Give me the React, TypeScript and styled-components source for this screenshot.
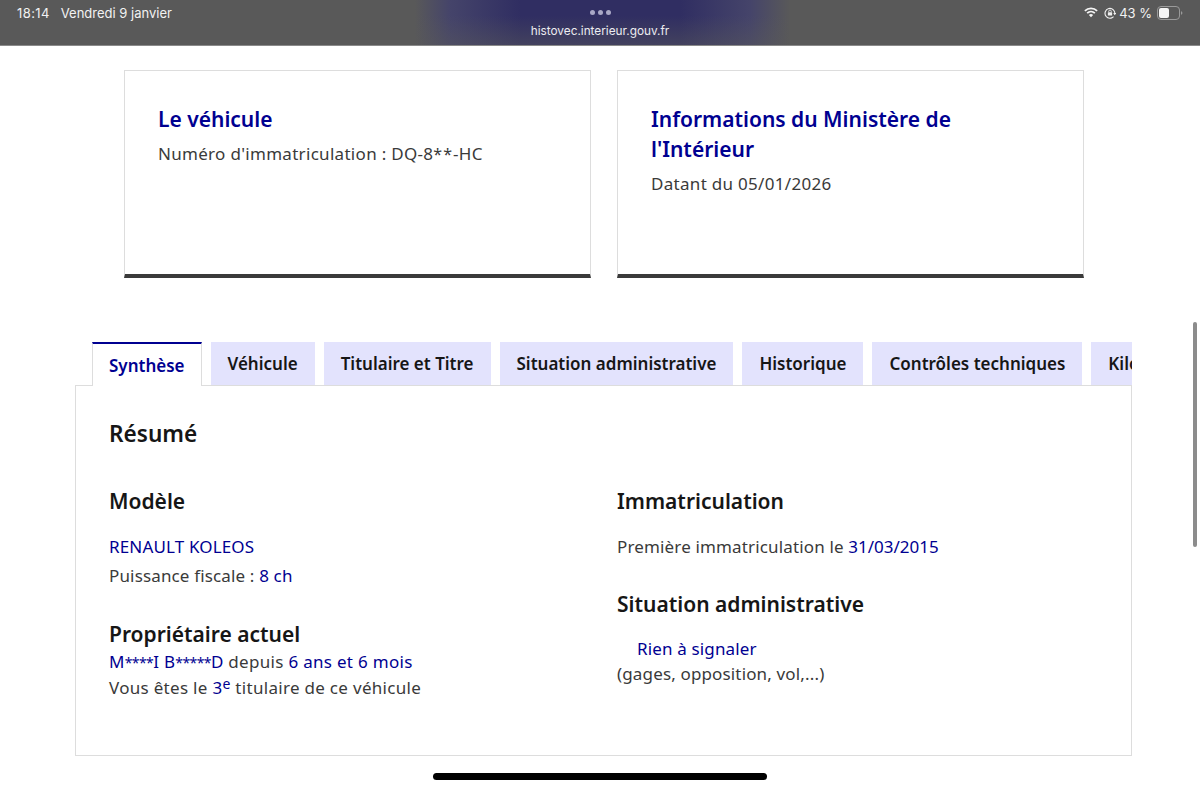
import React from "react";
import styled, { createGlobalStyle } from "styled-components";

const Global = createGlobalStyle`
  html, body { margin: 0; padding: 0; background: #fff; }
  body { font-family: "Noto Sans", "Open Sans", "Liberation Sans", sans-serif; }
  * { box-sizing: border-box; }
`;
const Page = styled.div`
  position: relative;
  width: 1200px;
  height: 788px;
  overflow: hidden;
  background: #fff;
`;
const StatusBar = styled.header`
  height: 46px;
  display: grid;
  grid-template-columns: 1fr auto 1fr;
  padding: 0 17px 0 17px;
  color: #f2f2f2;
  font-family: "Inter", "Liberation Sans", sans-serif;
  font-size: 13px;
  background:
    linear-gradient(180deg, rgba(89, 89, 89, 0) 35%, rgba(89, 89, 89, 0.45) 100%),
    linear-gradient(90deg, #595959 0, #595959 415px, #45446a 450px, #302e62 520px, #302e62 680px, #45446a 750px, #595959 790px, #595959 100%);
  border-bottom: 1px solid #8a8a8a;
`;
const StatusLeft = styled.div`
  display: flex;
  gap: 11px;
  padding-top: 6px;
  line-height: 14px;
`;
const Clock = styled.span`
  letter-spacing: 0.4px;
`;
const StatusCenter = styled.div`
  display: flex;
  flex-direction: column;
  align-items: center;
  padding-top: 10px;
`;
const Dots = styled.div`
  display: flex;
  gap: 3px;
  margin-bottom: 9px;
`;
const Dot = styled.span`
  width: 5px;
  height: 5px;
  border-radius: 50%;
  background: #a9a8c6;
`;
const Url = styled.div`
  font-size: 11.8px;
  line-height: 14px;
  color: #ececf0;
`;
const StatusRight = styled.div`
  display: flex;
  justify-content: flex-end;
  align-items: flex-start;
  gap: 4px;
  padding-top: 6px;
  line-height: 14px;
`;
const StatusIcon = styled.svg<{ $left?: number }>`
  margin: 1px 0 0 ${(p) => p.$left ?? 0}px;
`;
const Percent = styled.span`
  margin: 0 1px 0 -1px;
`;
const Main = styled.main`
  padding: 24px 0 0 75px;
  width: 1132px;
`;
const Cards = styled.section`
  display: flex;
  gap: 26px;
  margin-left: 49px;
`;
const Card = styled.article`
  width: 467px;
  height: 208px;
  padding: 33px 33px 0;
  border: 1px solid #dddddd;
  border-bottom: 4px solid #3a3a3a;
`;
const CardTitle = styled.h2`
  margin: 0 0 5px;
  font-size: 21px;
  line-height: 30px;
  font-weight: 600;
  color: #000091;
`;
const CardText = styled.p`
  margin: 0;
  font-size: 17px;
  letter-spacing: 0.3px;
  line-height: 30px;
  color: #3a3a3a;
`;
const Tabs = styled.nav`
  position: relative;
  z-index: 1;
  display: flex;
  gap: 9px;
  height: 44px;
  margin-top: 64px;
  margin-bottom: -1px;
  padding-left: 17px;
  overflow: hidden;
`;
const Tab = styled.div<{ $active?: boolean }>`
  flex: none;
  height: ${(p) => (p.$active ? "44px" : "43px")};
  padding: 0 ${(p) => (p.$active ? 16 : 17)}px;
  display: flex;
  align-items: center;
  font-size: 17px;
  font-weight: 600;
  white-space: nowrap;
  color: ${(p) => (p.$active ? "#000091" : "#161616")};
  background: ${(p) => (p.$active ? "#fff" : "#e3e3fd")};
  border-top: ${(p) => (p.$active ? "2px solid #000091" : "none")};
  border-left: ${(p) => (p.$active ? "1px solid #dddddd" : "none")};
  border-right: ${(p) => (p.$active ? "1px solid #dddddd" : "none")};
`;
const Panel = styled.section`
  height: 371px;
  padding: 32px 33px 0;
  border: 1px solid #dddddd;
`;
const PanelTitle = styled.h2`
  margin: 0 0 36px;
  font-size: 22.6px;
  line-height: 32px;
  font-weight: 600;
  color: #161616;
`;
const Columns = styled.div`
  display: grid;
  grid-template-columns: 508px 1fr;
`;
const Column = styled.div``;
const Heading = styled.h3<{ $after?: number }>`
  margin: 0 0 ${(p) => p.$after ?? 0}px;
  font-size: 21px;
  line-height: 30px;
  font-weight: 600;
  color: #161616;
`;
const Line = styled.p<{ $after?: number; $indent?: number; $height?: number; $spacing?: number }>`
  margin: 0 0 ${(p) => p.$after ?? 0}px;
  padding-left: ${(p) => p.$indent ?? 0}px;
  font-size: 17px;
  letter-spacing: ${(p) => p.$spacing ?? 0.15}px;
  line-height: ${(p) => p.$height ?? 29}px;
  color: #3a3a3a;
`;
const Value = styled.span<{ $tight?: boolean }>`
  color: #000091;
  letter-spacing: ${(p) => (p.$tight ? "0" : "inherit")};
`;
const Stars = styled.span`
  font-size: 14px;
  letter-spacing: -0.6px;
`;
const CardStars = styled.span`
  font-size: 16px;
  letter-spacing: 1px;
`;
const Sup = styled.sup`
  font-size: 14px;
  line-height: 0;
  vertical-align: 5px;
  color: #000091;
`;
const ScrollThumb = styled.div`
  position: absolute;
  left: 1193px;
  top: 322px;
  width: 4px;
  height: 225px;
  border-radius: 2px;
  background: #8c8c8c;
`;
const HomeBar = styled.div`
  position: absolute;
  left: 433px;
  top: 773px;
  width: 334px;
  height: 7px;
  border-radius: 4px;
  background: #000;
`;

const Wifi = () => (
  <StatusIcon width="14" height="11" viewBox="0 0 16 12">
    <path d="M1 4.2a10 10 0 0 1 14 0" fill="none" stroke="#f4f4f4" strokeWidth="2" />
    <path d="M3.6 6.8a6.4 6.4 0 0 1 8.8 0" fill="none" stroke="#f4f4f4" strokeWidth="2" />
    <path d="M8 11.5 5.6 8.9a3.4 3.4 0 0 1 4.8 0z" fill="#f4f4f4" />
  </StatusIcon>
);
const Lock = () => (
  <StatusIcon $left={2} width="12" height="12" viewBox="0 0 13 13">
    <path d="M2.3 10.2A5.3 5.3 0 1 1 11.6 8" fill="none" stroke="#f0f0f0" strokeWidth="1.2" />
    <path d="M2.3 10.2A5.3 5.3 0 0 0 11.6 8" fill="none" stroke="#f0f0f0" strokeWidth="1.2" strokeDasharray="9 3" />
    <path d="M10 6.6h3.2l-1.6 2.4z" fill="#f0f0f0" />
    <rect x="4.2" y="5.6" width="4.6" height="3.6" rx=".6" fill="#f0f0f0" />
    <path d="M5.1 5.6V4.7a1.4 1.4 0 0 1 2.8 0v.9" fill="none" stroke="#f0f0f0" strokeWidth=".9" />
  </StatusIcon>
);
const Battery = () => (
  <svg width="26" height="14" viewBox="0 0 26 14">
    <rect x=".5" y=".5" width="22" height="13" rx="3.5" fill="none" stroke="#9a9a9a" />
    <rect x="2" y="2" width="10" height="10" rx="2" fill="#f6f6f6" />
    <path d="M24 5.2c1 .3 1.4 1 1.4 1.8s-.4 1.5-1.4 1.8z" fill="#9a9a9a" />
  </svg>
);

const tabs = ["Véhicule", "Titulaire et Titre", "Situation administrative", "Historique", "Contrôles techniques", "Kilométrage"];

export default function App() {
  return (
    <Page>
      <Global />
      <StatusBar>
        <StatusLeft>
          <Clock>18:14</Clock>
          <span>Vendredi 9 janvier</span>
        </StatusLeft>
        <StatusCenter>
          <Dots>
            <Dot />
            <Dot />
            <Dot />
          </Dots>
          <Url>histovec.interieur.gouv.fr</Url>
        </StatusCenter>
        <StatusRight>
          <Wifi />
          <Lock />
          <Percent>43 %</Percent>
          <Battery />
        </StatusRight>
      </StatusBar>
      <Main>
        <Cards>
          <Card>
            <CardTitle>Le véhicule</CardTitle>
            <CardText>Numéro d'immatriculation : DQ-8<CardStars>**</CardStars>-HC</CardText>
          </Card>
          <Card>
            <CardTitle>Informations du Ministère de l'Intérieur</CardTitle>
            <CardText>Datant du 05/01/2026</CardText>
          </Card>
        </Cards>
        <Tabs>
          <Tab $active>Synthèse</Tab>
          {tabs.map((t) => (
            <Tab key={t}>{t}</Tab>
          ))}
        </Tabs>
        <Panel>
          <PanelTitle>Résumé</PanelTitle>
          <Columns>
            <Column>
              <Heading $after={16}>Modèle</Heading>
              <Line><Value>RENAULT KOLEOS</Value></Line>
              <Line $after={29}>Puissance fiscale : <Value>8 ch</Value></Line>
              <Heading>Propriétaire actuel</Heading>
              <Line $height={26} $spacing={0.3}><Value>M<Stars>****</Stars>I B<Stars>*****</Stars>D</Value> depuis <Value>6 ans et 6 mois</Value></Line>
              <Line $height={24} $spacing={0.3}>Vous êtes le <Value>3</Value><Sup>e</Sup> titulaire de ce véhicule</Line>
            </Column>
            <Column>
              <Heading $after={16}>Immatriculation</Heading>
              <Line $after={28}>Première immatriculation le <Value $tight>31/03/2015</Value></Line>
              <Heading $after={17}>Situation administrative</Heading>
              <Line $indent={20} $height={26}><Value>Rien à signaler</Value></Line>
              <Line $height={24}>(gages, opposition, vol,...)</Line>
            </Column>
          </Columns>
        </Panel>
      </Main>
      <ScrollThumb />
      <HomeBar />
    </Page>
  );
}
